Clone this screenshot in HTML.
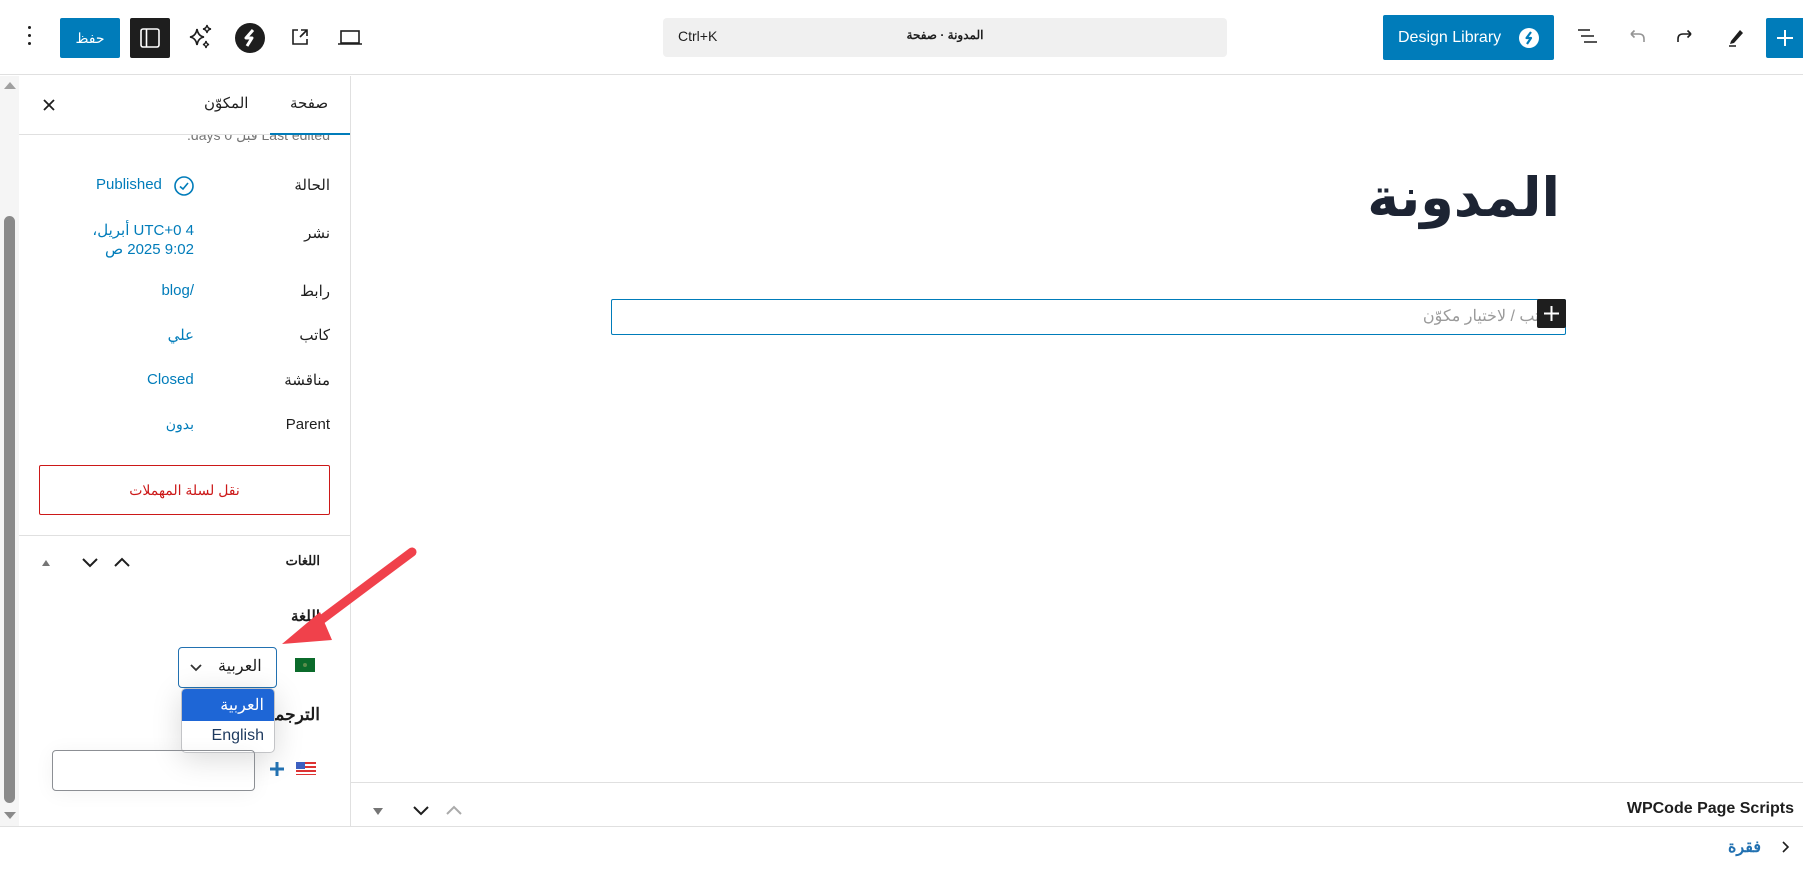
<!DOCTYPE html>
<html><head><meta charset="utf-8"><style>
*{box-sizing:border-box;margin:0;padding:0}
body{width:1803px;height:869px;overflow:hidden;background:#fff;font-family:"Liberation Sans","Noto Sans CJK SC",sans-serif;color:#1e1e1e;position:relative}
.a{position:absolute}
.blue{color:#007cba}
svg{display:block}
</style></head><body>
<!-- header -->
<div class="a" style="left:0;top:0;width:1803px;height:75px;border-bottom:1px solid #e0e0e0"></div>
<div class="a" style="left:28px;top:26px;width:4px;height:24px">
<div style="width:3px;height:3px;background:#1e1e1e;border-radius:50%;margin-bottom:5px"></div>
<div style="width:3px;height:3px;background:#1e1e1e;border-radius:50%;margin-bottom:5px"></div>
<div style="width:3px;height:3px;background:#1e1e1e;border-radius:50%"></div></div>
<div class="a" style="left:60px;top:18px;width:60px;height:40px;background:#007cba;border-radius:2px;color:#fff;font-size:14px;text-align:center;line-height:40px">حفظ</div>
<div class="a" style="left:130px;top:18px;width:40px;height:40px;background:#1e1e1e;border-radius:2px">
<svg width="40" height="40"><rect x="11" y="11" width="18" height="18" rx="2" fill="none" stroke="#fff" stroke-width="1.6"/><line x1="16.5" y1="11" x2="16.5" y2="29" stroke="#fff" stroke-width="1.6"/></svg></div>
<svg class="a" style="left:187px;top:23px" width="28" height="30" viewBox="0 0 28 30"><path d="M10 6 Q11 13 17 14 Q11 15 10 22 Q9 15 3 14 Q9 13 10 6Z" fill="none" stroke="#1e1e1e" stroke-width="1.6"/><path d="M20 2 Q20.5 5.5 24 6 Q20.5 6.5 20 10 Q19.5 6.5 16 6 Q19.5 5.5 20 2Z" fill="none" stroke="#1e1e1e" stroke-width="1.4"/><path d="M19 18 Q19.5 21 22 21.5 Q19.5 22 19 25 Q18.5 22 16 21.5 Q18.5 21 19 18Z" fill="none" stroke="#1e1e1e" stroke-width="1.4"/></svg>
<svg class="a" style="left:235px;top:23px" width="30" height="30"><circle cx="15" cy="15" r="15" fill="#1e1e1e"/><path d="M18 7 L11 15 L17 15 L12 23" fill="none" stroke="#fff" stroke-width="3" stroke-linejoin="round"/></svg>
<svg class="a" style="left:288px;top:25px" width="24" height="24"><path d="M10 5 H5 V19 H19 V14" fill="none" stroke="#1e1e1e" stroke-width="1.6"/><path d="M12 12 L19 5 M13 5 H19 V11" fill="none" stroke="#1e1e1e" stroke-width="1.6"/></svg>
<svg class="a" style="left:336px;top:25px" width="28" height="24"><rect x="5" y="6" width="18" height="12" fill="none" stroke="#1e1e1e" stroke-width="1.6"/><line x1="2" y1="19" x2="26" y2="19" stroke="#1e1e1e" stroke-width="1.6"/></svg>
<div class="a" style="left:663px;top:18px;width:564px;height:39px;background:#f0f0f0;border-radius:4px"></div>
<div class="a" style="left:678px;top:28px;font-size:14px;color:#1e1e1e">Ctrl+K</div>
<div class="a" style="left:880px;top:28px;width:130px;text-align:center;font-size:12px;font-weight:bold;direction:rtl">المدونة · صفحة</div>
<div class="a" style="left:1383px;top:15px;width:171px;height:45px;background:#007cba;border-radius:2px;color:#fff;font-size:16px;line-height:45px;padding-left:15px">Design Library</div>
<svg class="a" style="left:1519px;top:28px" width="20" height="20"><circle cx="10" cy="10" r="10" fill="#fff"/><path d="M12 4 L7.5 10 L12 10 L8 16" fill="none" stroke="#007cba" stroke-width="2.2" stroke-linejoin="round"/></svg>
<svg class="a" style="left:1574px;top:26px" width="26" height="24"><path d="M4 4H16M7 10H20M10 16H23" stroke="#1e1e1e" stroke-width="1.6"/></svg>
<svg class="a" style="left:1624px;top:26px" width="24" height="24"><path d="M7 8 H15 Q20 8 20 13 V16 M7 8 L10.5 4.5 M7 8 L10.5 11.5" fill="none" stroke="#949494" stroke-width="1.6"/></svg>
<svg class="a" style="left:1674px;top:26px" width="24" height="24"><path d="M17 8 H9 Q4 8 4 13 V16 M17 8 L13.5 4.5 M17 8 L13.5 11.5" fill="none" stroke="#1e1e1e" stroke-width="1.6"/></svg>
<svg class="a" style="left:1724px;top:25px" width="24" height="24"><path d="M7 16 L16 5 L19 8 L10 18 L6 19Z" fill="#1e1e1e"/><line x1="5" y1="21" x2="12" y2="21" stroke="#1e1e1e" stroke-width="1.5"/></svg>
<div class="a" style="left:1766px;top:18px;width:37px;height:40px;background:#007cba;border-radius:2px 0 0 2px"><svg width="37" height="40"><path d="M19 12V28M11 20H27" stroke="#fff" stroke-width="2"/></svg></div>

<!-- left scrollbar -->
<div class="a" style="left:0;top:76px;width:19px;height:750px;background:#f5f5f5"></div>
<div class="a" style="left:4px;top:82px;width:0;height:0;border-left:6px solid transparent;border-right:6px solid transparent;border-bottom:7px solid #a0a0a0"></div>
<div class="a" style="left:4px;top:216px;width:11px;height:587px;background:#8a8a8a;border-radius:6px"></div>
<div class="a" style="left:4px;top:812px;width:0;height:0;border-left:6px solid transparent;border-right:6px solid transparent;border-top:7px solid #8a8a8a"></div>

<!-- sidebar -->
<div class="a" style="left:350px;top:76px;width:1px;height:750px;background:#e0e0e0"></div>
<div class="a" style="left:19px;top:134px;width:331px;height:1px;background:#e0e0e0"></div>
<div class="a" style="left:270px;top:133px;width:80px;height:2px;background:#007cba"></div>
<div class="a" style="left:290px;top:94px;font-size:15px">صفحة</div>
<div class="a" style="left:204px;top:94px;font-size:15px">المكوّن</div>
<svg class="a" style="left:42px;top:98px" width="14" height="14"><path d="M2 2L12 12M12 2L2 12" stroke="#1e1e1e" stroke-width="1.8"/></svg>
<div class="a" style="left:19px;top:135px;width:331px;height:12px;overflow:hidden"><div style="position:absolute;right:20px;top:-8px;font-size:14px;color:#757575;direction:rtl">Last edited قبل 0 days.</div></div>

<div class="a" style="right:1473px;top:176px;font-size:15px;direction:rtl">الحالة</div>
<div class="a blue" style="left:96px;top:176px;font-size:15px">Published</div>
<svg class="a" style="left:173px;top:175px" width="22" height="22"><circle cx="11" cy="11" r="9" fill="none" stroke="#007cba" stroke-width="1.6"/><path d="M7 11.5L10 14L15 8" fill="none" stroke="#007cba" stroke-width="1.6"/></svg>
<div class="a" style="right:1473px;top:224px;font-size:15px;direction:rtl">نشر</div>
<div class="a blue" style="right:1609px;top:221px;font-size:15px;line-height:19px;text-align:right;white-space:nowrap"><div style="direction:rtl">4 UTC+0 أبريل،</div><div style="direction:rtl">9:02 2025 ص</div></div>
<div class="a" style="right:1473px;top:282px;font-size:15px;direction:rtl">رابط</div>
<div class="a blue" style="right:1609px;top:282px;font-size:15px">blog/</div>
<div class="a" style="right:1473px;top:326px;font-size:15px;direction:rtl">كاتب</div>
<div class="a blue" style="right:1609px;top:326px;font-size:15px">علي</div>
<div class="a" style="right:1473px;top:371px;font-size:15px;direction:rtl">مناقشة</div>
<div class="a blue" style="left:147px;top:371px;font-size:15px">Closed</div>
<div class="a" style="right:1473px;top:416px;font-size:15px">Parent</div>
<div class="a blue" style="right:1609px;top:416px;font-size:14px">بدون</div>

<div class="a" style="left:39px;top:465px;width:291px;height:50px;border:1px solid #cc1818;border-radius:2px;color:#cc1818;font-size:14px;text-align:center;line-height:48px;direction:rtl">نقل لسلة المهملات</div>
<div class="a" style="left:19px;top:535px;width:331px;height:1px;background:#e0e0e0"></div>

<div class="a" style="right:1483px;top:553px;font-size:13px;font-weight:bold">اللغات</div>
<svg class="a" style="left:110px;top:554px" width="24" height="16"><path d="M5 12L12 5L19 12" fill="none" stroke="#1e1e1e" stroke-width="2"/></svg>
<svg class="a" style="left:78px;top:554px" width="24" height="16"><path d="M5 5L12 12L19 5" fill="none" stroke="#1e1e1e" stroke-width="2"/></svg>
<div class="a" style="left:42px;top:560px;width:0;height:0;border-left:4px solid transparent;border-right:4px solid transparent;border-bottom:6px solid #757575"></div>

<div class="a" style="right:1483px;top:607px;font-size:15px;font-weight:bold">اللغة</div>
<div class="a" style="left:295px;top:658px;width:20px;height:14px;background:#0b6b2b"><div style="width:4px;height:4px;border-radius:50%;background:#5b8c4b;margin:5px auto"></div></div>
<div class="a" style="left:178px;top:647px;width:99px;height:41px;border:1.5px solid #2271b1;border-radius:4px"></div>
<div class="a" style="left:218px;top:656px;font-size:16px;direction:rtl">العربية</div>
<svg class="a" style="left:188px;top:662px" width="16" height="12"><path d="M3 3L8 8L13 3" fill="none" stroke="#333" stroke-width="1.8"/></svg>
<div class="a" style="right:1483px;top:705px;font-size:17px;font-weight:bold">الترجمات</div>
<div class="a" style="left:181px;top:688px;width:94px;height:65px;background:#fff;border:1px solid #c3c4c7;border-radius:5px;overflow:hidden;box-shadow:0 6px 30px rgba(0,0,0,.15)">
<div style="height:32px;background:#1e66d6;color:#fff;font-size:16px;text-align:right;padding:6px 10px 0 0;direction:rtl">العربية</div>
<div style="height:32px;color:#1e3a5f;font-size:16px;text-align:right;padding:6px 10px 0 0">English</div></div>
<div class="a" style="left:52px;top:750px;width:203px;height:41px;border:1px solid #8c8f94;border-radius:4px;box-shadow:0 2px 20px rgba(0,0,0,.05)"></div>
<svg class="a" style="left:268px;top:760px" width="18" height="18"><path d="M9 2V16M2 9H16" stroke="#2271b1" stroke-width="3"/></svg>
<div class="a" style="left:296px;top:762px;width:20px;height:13px;background:repeating-linear-gradient(#d33 0 2px,#fff 2px 4px)"><div style="width:9px;height:7px;background:#3c5fc0"></div></div>

<!-- red arrow -->
<svg class="a" style="left:270px;top:540px" width="160" height="115"><line x1="142" y1="12" x2="35" y2="92" stroke="#f0414b" stroke-width="9" stroke-linecap="round"/><path d="M12 104 L50 72 L62 100Z" fill="#f0414b"/></svg>

<!-- editor -->
<div class="a" style="right:243px;top:166px;font-size:54px;font-weight:bold;color:#1d2433;direction:rtl;font-family:'Liberation Sans','DejaVu Sans',sans-serif;letter-spacing:-1px">المدونة</div>
<div class="a" style="left:611px;top:299px;width:955px;height:36px;border:1px solid #007cba;border-radius:2px"></div>
<div class="a" style="right:251px;top:306px;font-size:16px;color:#9a9a9a;direction:rtl">اكتب / لاختيار مكوّن</div>
<div class="a" style="left:1537px;top:299px;width:29px;height:29px;background:#1e1e1e;border-radius:2px"><svg width="29" height="29"><path d="M14.5 7V22M7 14.5H22" stroke="#fff" stroke-width="2"/></svg></div>

<div class="a" style="left:351px;top:782px;width:1452px;height:1px;background:#e0e0e0"></div>
<div class="a" style="right:9px;top:800px;font-size:16px;font-weight:bold;color:#1e1e1e">WPCode Page Scripts</div>
<div class="a" style="left:373px;top:808px;width:0;height:0;border-left:5px solid transparent;border-right:5px solid transparent;border-top:7px solid #757575"></div>
<svg class="a" style="left:410px;top:802px" width="22" height="16"><path d="M4 5L11 12L18 5" fill="none" stroke="#1e1e1e" stroke-width="2"/></svg>
<svg class="a" style="left:443px;top:802px" width="22" height="16"><path d="M4 12L11 5L18 12" fill="none" stroke="#aaa" stroke-width="2"/></svg>

<!-- footer -->
<div class="a" style="left:0;top:826px;width:1803px;height:1px;background:#e0e0e0"></div>
<div class="a" style="right:42px;top:837px;font-size:16px;font-weight:bold;color:#2271b1;direction:rtl">فقرة</div>
<svg class="a" style="left:1779px;top:839px" width="12" height="16"><path d="M4 3L9 8L4 13" fill="none" stroke="#1e1e1e" stroke-width="1.6"/></svg>
</body></html>
